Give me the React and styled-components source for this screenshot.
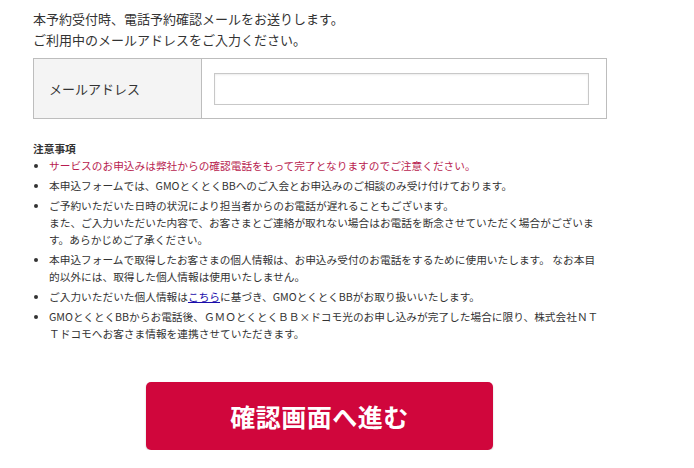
import React from "react";
import styled, { createGlobalStyle } from "styled-components";

const Global = createGlobalStyle`
  html, body { margin: 0; padding: 0; background: #fff; }
  body {
    font-family: "Noto Sans CJK JP", "Noto Sans", sans-serif;
    color: #333;
  }
`;

const Page = styled.div`
  padding: 8px 0 0 33px;
  width: 574px;
`;

const Intro = styled.p`
  margin: 0;
  font-size: 13px;
  line-height: 21px;
`;

const FormTable = styled.div`
  margin-top: 8px;
  display: grid;
  grid-template-columns: 168px 1fr;
  border: 1px solid #bdbdbd;
  height: 59px;
`;

const LabelCell = styled.div`
  background: #f4f4f4;
  border-right: 1px solid #bdbdbd;
  display: flex;
  align-items: center;
  padding-left: 15px;
  font-size: 13px;
`;

const InputCell = styled.div`
  display: flex;
  align-items: center;
  padding-left: 12px;
`;

const EmailInput = styled.input`
  box-sizing: border-box;
  width: 375px;
  height: 32px;
  border: 1px solid #c8c8c8;
  box-shadow: inset 0 1px 2px rgba(0, 0, 0, 0.08);
  outline: none;
  padding: 0 8px;
  font-size: 13px;
  font-family: inherit;
`;

const Notes = styled.div`
  margin-top: 21px;
  font-size: 10.7px;
  line-height: 17px;
`;

const NotesTitle = styled.div`
  font-weight: bold;
  font-size: 10.7px;
  margin-bottom: 0;
`;

const List = styled.ul`
  margin: 0;
  padding: 0 0 0 16px;
  width: 550px;
`;

const Item = styled.li`
  margin-bottom: 3px;
  color: ${(p) => (p.$alert ? "#b81c4f" : "#333")};
  &::marker { color: #333; font-size: 10px; }
`;

const Link = styled.a`
  color: #1a0dab;
  text-decoration: underline;
`;

const ButtonRow = styled.div`
  display: flex;
  padding-left: 113px;
  margin-top: 40px;
`;

const SubmitButton = styled.button`
  width: 347px;
  height: 68px;
  border: none;
  border-radius: 5px;
  background: #d0063c;
  color: #fff;
  font-family: "Noto Sans CJK JP", sans-serif;
  font-weight: bold;
  font-size: 25px;
  letter-spacing: 0.5px;
  box-shadow: 0 1px 2px rgba(0, 0, 0, 0.2);
  cursor: pointer;
`;

export default function App() {
  return (
    <>
      <Global />
      <Page>
        <Intro>
          本予約受付時、電話予約確認メールをお送りします。
          <br />
          ご利用中のメールアドレスをご入力ください。
        </Intro>
        <FormTable>
          <LabelCell>メールアドレス</LabelCell>
          <InputCell>
            <EmailInput type="email" />
          </InputCell>
        </FormTable>
        <Notes>
          <NotesTitle>注意事項</NotesTitle>
          <List>
            <Item $alert>
              サービスのお申込みは弊社からの確認電話をもって完了となりますのでご注意ください。
            </Item>
            <Item>
              本申込フォームでは、GMOとくとくBBへのご入会とお申込みのご相談のみ受け付けております。
            </Item>
            <Item>
              ご予約いただいた日時の状況により担当者からのお電話が遅れることもございます。
              <br />
              また、ご入力いただいた内容で、お客さまとご連絡が取れない場合はお電話を断念させていただく場合がございます。あらかじめご了承ください。
            </Item>
            <Item>
              本申込フォームで取得したお客さまの個人情報は、お申込み受付のお電話をするために使用いたします。
              なお本目的以外には、取得した個人情報は使用いたしません。
            </Item>
            <Item>
              ご入力いただいた個人情報は<Link href="#">こちら</Link>
              に基づき、GMOとくとくBBがお取り扱いいたします。
            </Item>
            <Item>
              GMOとくとくBBからお電話後、ＧＭＯとくとくＢＢ×ドコモ光のお申し込みが完了した場合に限り、株式会社ＮＴＴドコモへお客さま情報を連携させていただきます。
            </Item>
          </List>
        </Notes>
        <ButtonRow>
          <SubmitButton type="button">確認画面へ進む</SubmitButton>
        </ButtonRow>
      </Page>
    </>
  );
}
